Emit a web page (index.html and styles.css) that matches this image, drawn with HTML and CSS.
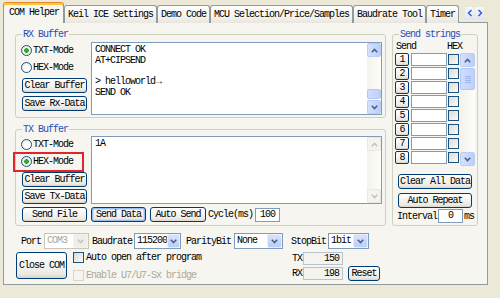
FILE: index.html
```html
<!DOCTYPE html>
<html lang="en">
<head>
    <meta charset="UTF-8">
    <meta name="viewport" content="width=device-width, initial-scale=1.0">
    <title>COM Helper</title>
    <link rel="stylesheet" href="styles.css">
</head>
<body>
<div class="window">
    <div class="tabbar">
        <div class="tabs">
            <div class="tab active">COM Helper</div>
            <div class="tab">Keil ICE Settings</div>
            <div class="tab">Demo Code</div>
            <div class="tab">MCU Selection/Price/Samples</div>
            <div class="tab">Baudrate Tool</div>
            <div class="tab">Timer</div>
        </div>
        <div class="tab-arrows">
            <span class="tab-arrow"><svg width="6" height="8" viewBox="0 0 6 8"><path d="M4.5 1 L1.5 4 L4.5 7" fill="none" stroke="#3b5fc8" stroke-width="1.5"/></svg></span>
            <span class="tab-arrow"><svg width="6" height="8" viewBox="0 0 6 8"><path d="M1.5 1 L4.5 4 L1.5 7" fill="none" stroke="#3b5fc8" stroke-width="1.5"/></svg></span>
        </div>
    </div>

    <div class="panel">
        <div class="top">
            <div class="buffers">
                <!-- receive side -->
                <div class="group rx-group">
                    <span class="group-title">RX Buffer</span>
                    <div class="modes">
                        <label class="radio checked"><i class="dot"></i>TXT-Mode</label>
                        <label class="radio"><i class="dot"></i>HEX-Mode</label>
                        <button class="btn side-btn first">Clear Buffer</button>
                        <button class="btn side-btn">Save Rx-Data</button>
                    </div>
                    <div class="textbox">
                        <div class="text">CONNECT OK<br>AT+CIPSEND<br><br>&gt; helloworld<span class="cr">&rarr;</span><br>SEND OK</div>
                        <div class="vscroll">
                            <span class="sb-btn"><svg width="7" height="5" viewBox="0 0 7 5"><path d="M0.8 4.2 L3.5 1.4 L6.2 4.2" fill="none" stroke="#4d6185" stroke-width="1.6"/></svg></span>
                            <span class="sb-track end"><span class="sb-thumb short"></span></span>
                            <span class="sb-btn"><svg width="7" height="5" viewBox="0 0 7 5"><path d="M0.8 0.8 L3.5 3.6 L6.2 0.8" fill="none" stroke="#4d6185" stroke-width="1.6"/></svg></span>
                        </div>
                    </div>
                </div>

                <!-- transmit side -->
                <div class="group tx-group">
                    <span class="group-title">TX Buffer</span>
                    <div class="tx-main">
                        <div class="modes">
                            <label class="radio"><i class="dot"></i>TXT-Mode</label>
                            <label class="radio checked marked"><i class="dot"></i>HEX-Mode<span class="highlight"></span></label>
                            <button class="btn side-btn first">Clear Buffer</button>
                            <button class="btn side-btn">Save Tx-Data</button>
                        </div>
                        <div class="textbox">
                            <div class="text">1A</div>
                            <div class="vscroll off">
                                <span class="sb-btn"><svg width="7" height="5" viewBox="0 0 7 5"><path d="M0.8 4.2 L3.5 1.4 L6.2 4.2" fill="none" stroke="#c3c3bb" stroke-width="1.6"/></svg></span>
                                <span class="sb-track"></span>
                                <span class="sb-btn"><svg width="7" height="5" viewBox="0 0 7 5"><path d="M0.8 0.8 L3.5 3.6 L6.2 0.8" fill="none" stroke="#c3c3bb" stroke-width="1.6"/></svg></span>
                            </div>
                        </div>
                    </div>
                    <div class="send-row">
                        <button class="btn send-file">Send File</button>
                        <button class="btn send-data focus">Send Data</button>
                        <button class="btn auto-send">Auto Send</button>
                        <span class="lbl">Cycle(ms)</span>
                        <span class="field cycle">100</span>
                    </div>
                </div>
            </div>

            <!-- preset strings -->
            <div class="group send-group">
                <span class="group-title">Send strings</span>
                <div class="send-head"><span>Send</span><span>HEX</span></div>
                <div class="string-list">
                    <div class="rows">
                        <div class="srow"><button class="btn num">1</button><span class="field sfield"></span><i class="check"></i></div>
                        <div class="srow"><button class="btn num">2</button><span class="field sfield"></span><i class="check"></i></div>
                        <div class="srow"><button class="btn num">3</button><span class="field sfield"></span><i class="check"></i></div>
                        <div class="srow"><button class="btn num">4</button><span class="field sfield"></span><i class="check"></i></div>
                        <div class="srow"><button class="btn num">5</button><span class="field sfield"></span><i class="check"></i></div>
                        <div class="srow"><button class="btn num">6</button><span class="field sfield"></span><i class="check"></i></div>
                        <div class="srow"><button class="btn num">7</button><span class="field sfield"></span><i class="check"></i></div>
                        <div class="srow"><button class="btn num">8</button><span class="field sfield"></span><i class="check"></i></div>
                    </div>
                    <div class="vscroll list-scroll">
                        <span class="sb-btn"><svg width="7" height="5" viewBox="0 0 7 5"><path d="M0.8 4.2 L3.5 1.4 L6.2 4.2" fill="none" stroke="#4d6185" stroke-width="1.6"/></svg></span>
                        <span class="sb-track"><span class="sb-thumb grip"><i></i><i></i><i></i><i></i></span></span>
                        <span class="sb-btn"><svg width="7" height="5" viewBox="0 0 7 5"><path d="M0.8 0.8 L3.5 3.6 L6.2 0.8" fill="none" stroke="#4d6185" stroke-width="1.6"/></svg></span>
                    </div>
                </div>
                <button class="btn wide first">Clear All Data</button>
                <button class="btn wide">Auto Repeat</button>
                <div class="interval">
                    <span class="lbl">Interval</span>
                    <span class="field ival">0</span>
                    <span class="lbl">ms</span>
                </div>
            </div>
        </div>

        <div class="port-row">
            <span class="lbl">Port</span>
            <span class="combo off port"><span class="val">COM3</span><span class="drop"><svg width="7" height="5" viewBox="0 0 7 5"><path d="M0.8 0.8 L3.5 3.6 L6.2 0.8" fill="none" stroke="#c3c3bb" stroke-width="1.6"/></svg></span></span>
            <span class="lbl">Baudrate</span>
            <span class="combo baud"><span class="val">115200</span><span class="drop"><svg width="7" height="5" viewBox="0 0 7 5"><path d="M0.8 0.8 L3.5 3.6 L6.2 0.8" fill="none" stroke="#4d6185" stroke-width="1.6"/></svg></span></span>
            <span class="lbl parity-lbl">ParityBit</span>
            <span class="combo parity"><span class="val">None</span><span class="drop"><svg width="7" height="5" viewBox="0 0 7 5"><path d="M0.8 0.8 L3.5 3.6 L6.2 0.8" fill="none" stroke="#4d6185" stroke-width="1.6"/></svg></span></span>
            <span class="lbl stop-lbl">StopBit</span>
            <span class="combo stop"><span class="val">1bit</span><span class="drop"><svg width="7" height="5" viewBox="0 0 7 5"><path d="M0.8 0.8 L3.5 3.6 L6.2 0.8" fill="none" stroke="#4d6185" stroke-width="1.6"/></svg></span></span>
        </div>

        <div class="status-row">
            <button class="btn close-com">Close COM</button>
            <div class="options">
                <label class="opt"><i class="check"></i>Auto open after program</label>
                <label class="opt off"><i class="check"></i>Enable U7/U7-Sx bridge</label>
            </div>
            <div class="counters">
                <button class="btn reset">Reset</button>
                <span class="lbl">TX</span>
                <span class="field count">150</span>
                <span class="lbl">RX</span>
                <span class="field count">198</span>
            </div>
        </div>
    </div>
</div>
</body>
</html>
```

FILE: styles.css
```css
* {
    box-sizing: border-box;
}

body {
    margin: 0;
    width: 500px;
    height: 298px;
    overflow: hidden;
    background-color: #ece9d8;
    font-family: "Liberation Mono", monospace;
    font-size: 10px;
    letter-spacing: -1px;
    color: #000;
}

button {
    font: inherit;
    letter-spacing: inherit;
    color: inherit;
    margin: 0;
}

.window {
    padding: 2px 0 0 3px;
}

/* tab strip */
.tabbar {
    display: flex;
    align-items: flex-start;
    height: 21px;
    margin-bottom: -1px;
}

.tabs {
    display: flex;
    align-items: flex-end;
    width: 462px;
    height: 21px;
    overflow: hidden;
}

.tab {
    flex: none;
    height: 18px;
    padding: 0 3px;
    border: 1px solid #919b9c;
    border-bottom: none;
    border-radius: 3px 3px 0 0;
    background: linear-gradient(#fefefe, #f4f3ee 60%, #e8e6dd);
    line-height: 17px;
    white-space: nowrap;
}

.tab.active {
    position: relative;
    z-index: 1;
    height: 21px;
    padding: 0 4px 0 5px;
    border-top-color: #e68b2c;
    background: #f6f5ef;
    box-shadow: inset 0 2px #ffc83c;
    line-height: 20px;
}

.tab-arrows {
    display: flex;
    gap: 1px;
    margin-top: 5px;
}

.tab-arrow {
    width: 9px;
    height: 12px;
    display: flex;
    align-items: center;
    justify-content: center;
    background: linear-gradient(#f6f8fe, #dde6fb);
    border-radius: 2px;
}

/* tab page */
.panel {
    width: 485px;
    height: 263px;
    border: 1px solid #919b9c;
    background-color: #f6f5ef;
    padding: 11px 0 0 11px;
}

.top {
    display: flex;
    gap: 6px;
}

.buffers {
    width: 371px;
    display: flex;
    flex-direction: column;
    gap: 11px;
}

.group {
    position: relative;
    border: 1px solid #d0d0bf;
    border-radius: 3px;
}

.group-title {
    position: absolute;
    top: -6px;
    left: 6px;
    padding: 0 1px;
    background-color: #f6f5ef;
    color: #1f4fb8;
    line-height: 11px;
}

.rx-group {
    height: 84px;
    display: flex;
    gap: 3px;
    padding: 7px 3px 2px 6px;
}

.tx-group {
    height: 97px;
    padding: 6px 3px 3px 6px;
}

.tx-main {
    display: flex;
    gap: 3px;
    height: 68px;
}

.modes {
    width: 66px;
    flex: none;
    display: flex;
    flex-direction: column;
}

.radio {
    position: relative;
    height: 17px;
    display: flex;
    align-items: center;
    gap: 1px;
    white-space: nowrap;
}

.dot {
    width: 11px;
    height: 11px;
    margin-left: -1px;
    border: 1px solid #1c5180;
    border-radius: 50%;
    background: radial-gradient(circle at 60% 60%, #fff 30%, #e3e2da 100%);
}

.radio.checked .dot {
    background: radial-gradient(circle, #3cb43c 0, #21a121 2px, #f4f4ef 2.6px, #e3e2da 100%);
}

/* red annotation box around the selected mode */
.highlight {
    position: absolute;
    left: -9px;
    top: -1px;
    width: 71px;
    height: 20px;
    border: 2px solid #e0262a;
}

.btn {
    padding: 0;
    border: 1px solid #003c74;
    border-radius: 3px;
    background: linear-gradient(#ffffff, #f5f4f0 45%, #ebe9e1 85%, #d8d3c8);
    line-height: 13px;
    white-space: nowrap;
}

.btn.focus {
    box-shadow: inset 0 0 0 1px #9cbdf1, inset 0 0 0 2px #c9dbf9;
}

.side-btn {
    height: 15px;
    width: 65px;
    margin-top: 2px;
}

.rx-group .side-btn {
    margin-top: 3px;
}

.side-btn.first,
.rx-group .side-btn.first {
    margin-top: 2px;
}

.textbox {
    flex: 1;
    display: flex;
    border: 1px solid #7f9db9;
    background-color: #fff;
}

.text {
    flex: 1;
    padding: 2px 3px;
    line-height: 10.8px;
}

.cr {
    margin-left: 1px;
}

/* scrollbars */
.vscroll {
    width: 14px;
    flex: none;
    display: flex;
    flex-direction: column;
    background: linear-gradient(90deg, #f3f2ec, #fdfdfa);
}

.sb-btn {
    height: 14px;
    flex: none;
    display: flex;
    align-items: center;
    justify-content: center;
    border: 1px solid #bccdf5;
    border-radius: 2px;
    background: linear-gradient(90deg, #d5e1fc, #bccffa);
}

.vscroll.off .sb-btn {
    border-color: #e9e8e1;
    background: #f5f4ef;
}

.sb-track {
    flex: 1;
    display: flex;
    flex-direction: column;
    padding: 1px 0;
}

.sb-track.end {
    justify-content: flex-end;
}

.sb-thumb {
    border: 1px solid #b4c7f4;
    border-radius: 2px;
    background: linear-gradient(90deg, #cfdcfc, #bfd0f9);
}

.sb-thumb.short {
    height: 10px;
}

.sb-thumb.grip {
    height: 22px;
    display: flex;
    flex-direction: column;
    align-items: center;
    justify-content: center;
    gap: 1px;
}

.sb-thumb.grip i {
    width: 6px;
    height: 1px;
    background-color: #eef3fe;
    border-bottom: 1px solid #9db5ec;
}

/* transmit controls */
.send-row {
    display: flex;
    align-items: center;
    gap: 4px;
    margin-top: 3px;
    height: 15px;
}

.send-row .btn {
    height: 15px;
}

.send-file {
    width: 65px;
}

.send-data {
    width: 55px;
}

.auto-send {
    width: 56px;
}

.send-row .lbl {
    margin-left: -2px;
}

.field {
    display: block;
    border: 1px solid #7f9db9;
    background-color: #fff;
    line-height: 11px;
}

.cycle {
    width: 25px;
    height: 14px;
    margin-left: -2px;
    text-align: center;
}

/* preset strings */
.send-group {
    width: 86px;
    height: 192px;
    padding: 7px 0 0 2px;
}

.send-head {
    display: flex;
    justify-content: space-between;
    width: 67px;
    padding-left: 1px;
    height: 11px;
    line-height: 10px;
}

.string-list {
    display: flex;
}

.rows {
    display: flex;
    flex-direction: column;
}

.srow {
    height: 14px;
    display: flex;
    align-items: flex-start;
}

.num {
    width: 14px;
    height: 13px;
    border-radius: 2px;
    line-height: 11px;
}

.sfield {
    width: 36px;
    height: 13px;
    margin-left: 2px;
}

.check {
    display: block;
    width: 11px;
    height: 11px;
    margin-left: 1px;
    margin-top: 1px;
    border: 1px solid #1c5180;
    background: linear-gradient(135deg, #dcdbd3, #fbfbf8);
}

.list-scroll {
    width: 15px;
    height: 113px;
    margin-left: 1px;
}

.wide {
    display: block;
    width: 74px;
    height: 15px;
    margin: 4px 0 0 3px;
}

.wide.first {
    margin-top: 8px;
}

.interval {
    display: flex;
    align-items: center;
    gap: 1px;
    height: 14px;
    margin-top: 1px;
    padding-left: 2px;
}

.ival {
    width: 25px;
    height: 14px;
    text-align: center;
}

/* port settings */
.port-row {
    display: flex;
    align-items: center;
    height: 16px;
    margin: 7px 0 0 6px;
}

.combo {
    display: flex;
    height: 16px;
    border: 1px solid #7f9db9;
    background-color: #fff;
}

.combo .val {
    flex: 1;
    padding-left: 2px;
    line-height: 14px;
}

.combo .drop {
    width: 15px;
    display: flex;
    align-items: center;
    justify-content: center;
    border: 1px solid #e6edfd;
    border-radius: 2px;
    background: linear-gradient(#d8e3fc, #b9cdf8);
}

.combo.off {
    border-color: #c9c7ba;
    color: #aca899;
}

.combo.off .drop {
    border-color: #f3f3ee;
    background: #efeee8;
}

.port {
    width: 45px;
    margin: 0 3px;
}

.baud {
    width: 47px;
    margin-left: 2px;
}

.parity-lbl {
    margin-left: 5px;
}

.parity {
    width: 49px;
    margin-left: 3px;
}

.stop-lbl {
    margin-left: 8px;
}

.stop {
    width: 41px;
    margin-left: 2px;
}

/* connection row */
.status-row {
    display: flex;
    margin-top: 3px;
    padding-left: 1px;
}

.close-com {
    width: 51px;
    height: 27px;
}

.options {
    width: 219px;
    margin-left: 6px;
}

.opt {
    display: flex;
    align-items: flex-start;
    gap: 2px;
    height: 17px;
    line-height: 11px;
}

.opt .check {
    margin: 0;
}

.opt.off {
    color: #aca899;
    padding-top: 1px;
}

.opt.off .check {
    border-color: #d8d6c8;
    background: #f5f4ef;
}

.counters {
    display: grid;
    grid-template-columns: 11px 40px 37px;
    grid-template-rows: 13px 13px;
    row-gap: 2px;
    align-items: center;
}

.counters .lbl {
    grid-column: 1;
}

.count {
    grid-column: 2;
    height: 13px;
    padding-right: 3px;
    text-align: right;
    border-color: #b9c3cf;
    background-color: #f4f3ee;
}

.reset {
    grid-column: 3;
    grid-row: 2;
    align-self: end;
    width: 32px;
    height: 15px;
    margin-left: 5px;
    margin-bottom: -1px;
}
```
